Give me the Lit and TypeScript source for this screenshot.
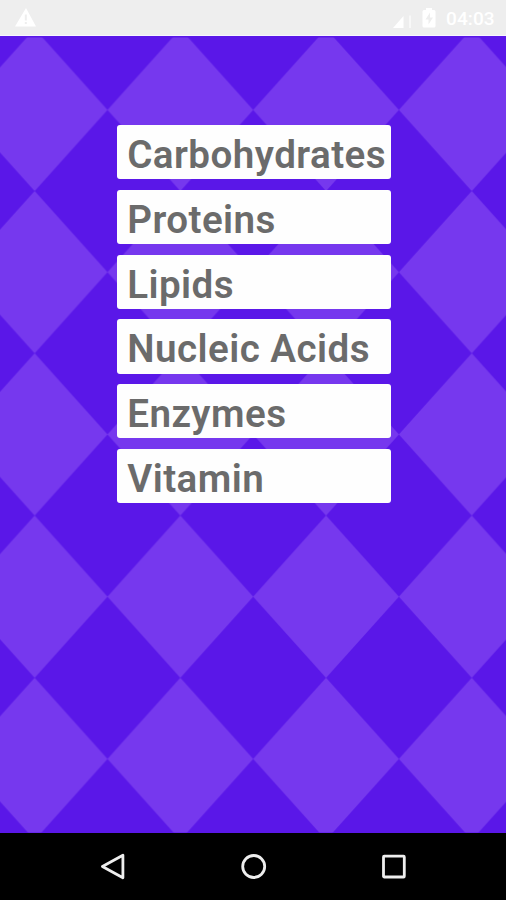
import { LitElement, html, css } from "lit";
import { customElement, property } from "lit/decorators.js";

@customElement("status-bar")
class StatusBar extends LitElement {
  static styles = css`
    :host { display: flex; align-items: center; height: 36px; background: #eeeeee; color: #fff;
      box-sizing: border-box; padding: 0 11px 0 15px; border-bottom: 1px solid #f8f6ff; }
    .spacer { flex: 1; }
    svg { display: block; flex: none; }
    .signal { margin-right: 10px; }
    .battery { margin-right: 10px; }
    .time { font: 500 19px/36px Roboto, sans-serif; width: 49px; white-space: nowrap; letter-spacing: 0.1px; padding-top: 3px; }
  `;
  render() {
    return html`
      <svg width="21" height="36" viewBox="0 0 21 36">
        <path fill="#fff" fill-rule="evenodd" d="M11 8 21 26.5H0ZM9.8 14.5v6h2v-6ZM9.8 22v2h2v-2Z" />
      </svg>
      <div class="spacer"></div>
      <svg class="signal" width="19" height="36" viewBox="0 0 19 36">
        <path fill="#fff" d="M0 28 10.5 16V28Z" />
        <path fill="#f8f8f8" d="M16 15.5H18V28h-2Z" />
      </svg>
      <svg class="battery" width="14" height="36" viewBox="0 0 14 36">
        <path fill="#fff" fill-rule="evenodd" d="M4 8h6v2h2q1.5 0 1.5 1.5V26q0 1.5-1.5 1.5H2Q.5 27.5.5 26V11.5Q.5 10 2 10h2ZM8 12.5 3.5 19.5H6.5V24.5L11 17.5H8Z" />
      </svg>
      <div class="time">04:03</div>
    `;
  }
}

@customElement("topic-item")
class TopicItem extends LitElement {
  @property() label = "";
  static styles = css`
    :host { display: block; height: 54.2px; box-sizing: border-box; padding-left: 10.2px;
      background: #fefefe; border-radius: 3px; color: #6b6b6b; letter-spacing: 0.45px;
      font: 600 38.6px/59px Roboto, sans-serif; white-space: nowrap; }
  `;
  render() {
    return html`${this.label}`;
  }
}

@customElement("nav-bar")
class NavBar extends LitElement {
  static styles = css`
    :host { display: flex; justify-content: space-between; align-items: center; height: 67px;
      background: #000; padding: 0 98px 0 99px; box-sizing: border-box; }
    svg { display: block; fill: none; stroke: #eeeeee; stroke-width: 2.8; stroke-linejoin: round; }
  `;
  render() {
    return html`
      <svg width="28" height="28" viewBox="0 0 28 28"><path d="M23.900 2.2v22.6L3.4 13.5Z" /></svg>
      <svg width="28" height="28" viewBox="0 0 28 28"><circle cx="13.700" cy="13.5" r="11" /></svg>
      <svg width="28" height="28" viewBox="0 0 28 28"><rect x="3.5" y="3.2" width="20.8" height="20.8" rx="0.8" /></svg>
    `;
  }
}

@customElement("app-root")
class AppRoot extends LitElement {
  private topics = ["Carbohydrates", "Proteins", "Lipids", "Nucleic Acids", "Enzymes", "Vitamin"];

  static styles = css`
    :host { display: flex; flex-direction: column; width: 506px; height: 900px; overflow: hidden; }
    .stage { flex: 1; display: grid; min-height: 0; background: #5a17e8; }
    .pattern, .list { grid-area: 1 / 1; }
    .pattern { display: block; }
    .light { fill: #7638ee; }
    .list { display: flex; flex-direction: column; gap: 10.5px; width: 273.5px; margin: 89.3px 0 0 117px; align-self: start; }
  `;

  render() {
    return html`
      <status-bar></status-bar>
      <div class="stage">
        <svg class="pattern" width="506" height="797" viewBox="0 36 506 797">
          <defs>
            <pattern id="harlequin" patternUnits="userSpaceOnUse" x="107.5" y="28.8" width="145.7" height="162.25">
              <path class="light" d="M72.85 0 145.7 81.125 72.85 162.25 0 81.125Z" />
            </pattern>
          </defs>
          <rect y="37.5" width="506" height="795" fill="url(#harlequin)" />
        </svg>
        <div class="list">${this.topics.map((t) => html`<topic-item .label=${t}></topic-item>`)}</div>
      </div>
      <nav-bar></nav-bar>
    `;
  }
}
